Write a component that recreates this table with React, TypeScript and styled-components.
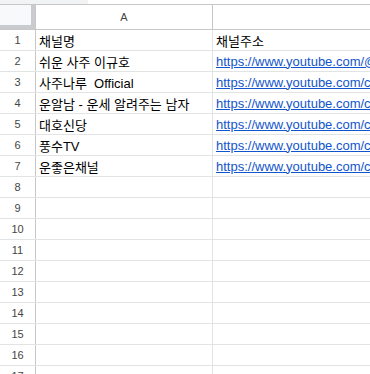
import styled, { createGlobalStyle } from "styled-components";

const GlobalStyle = createGlobalStyle`
  html, body {
    margin: 0;
    padding: 0;
    background: #ffffff;
    overflow: hidden;
  }
  body {
    font-family: "Liberation Sans", "Noto Sans CJK KR", Arial, sans-serif;
  }
`;

const rows: { name: string; url: string }[] = [
  { name: "채널명", url: "" },
  { name: "쉬운 사주 이규호", url: "https://www.youtube.com/@sajulee" },
  { name: "사주나루  Official", url: "https://www.youtube.com/channel/UC" },
  { name: "운알남 - 운세 알려주는 남자", url: "https://www.youtube.com/channel/UC" },
  { name: "대호신당", url: "https://www.youtube.com/channel/UC" },
  { name: "풍수TV", url: "https://www.youtube.com/channel/UC" },
  { name: "운좋은채널", url: "https://www.youtube.com/channel/UC" }
];

const TOTAL_ROWS = 17;

export default function App() {
  return (
    <Sheet>
      <GlobalStyle />
      <TopStrip>
        <NameBoxEdge />
      </TopStrip>
      <HeaderRow>
        <Corner />
        <ColHeader $width={177}>A</ColHeader>
        <ColHeader $width={200} />
      </HeaderRow>
      {Array.from({ length: TOTAL_ROWS }, (_, i) => {
        const row = rows[i];
        return (
          <Row key={i}>
            <RowHeader>{i + 1}</RowHeader>
            <Cell $width={177}>{row?.name}</Cell>
            <Cell $width={200}>
              {i === 0 ? "채널주소" : row ? <Link>{row.url}</Link> : null}
            </Cell>
          </Row>
        );
      })}
    </Sheet>
  );
}

const Sheet = styled.div`
  width: 370px;
  height: 374px;
  overflow: hidden;
  display: flex;
  flex-direction: column;
`;

const TopStrip = styled.div`
  height: 4px;
  flex: none;
  display: flex;
  background: #ffffff;
  border-bottom: 1px solid #c7c7c7;
`;

const NameBoxEdge = styled.div`
  width: 88px;
  background: #f1f3f4;
`;

const HeaderRow = styled.div`
  display: flex;
  height: 25px;
  flex: none;
  border-bottom: 1px solid #c7c7c7;
  box-sizing: border-box;
`;

const Corner = styled.div`
  width: 36px;
  flex: none;
  box-sizing: border-box;
  background: #f8f9fa;
  border-right: 1px solid #c7c7c7;
  box-shadow: inset -4px -4px 0 #c9cbce;
`;

const ColHeader = styled.div<{ $width: number }>`
  width: ${(p) => p.$width}px;
  flex: none;
  box-sizing: border-box;
  border-right: 1px solid #c7c7c7;
  background: #ffffff;
  display: flex;
  align-items: center;
  justify-content: center;
  font-size: 11px;
  color: #444746;
`;

const Row = styled.div`
  display: flex;
  height: 21px;
  flex: none;
  box-sizing: border-box;
  border-bottom: 1px solid #e2e3e3;
`;

const RowHeader = styled.div`
  width: 36px;
  flex: none;
  box-sizing: border-box;
  border-right: 1px solid #c7c7c7;
  display: flex;
  align-items: center;
  justify-content: center;
  font-size: 11px;
  color: #444746;
`;

const Cell = styled.div<{ $width: number }>`
  width: ${(p) => p.$width}px;
  flex: none;
  box-sizing: border-box;
  border-right: 1px solid #e2e3e3;
  padding: 0 3px;
  display: flex;
  align-items: center;
  font-size: 13px;
  color: #000000;
  white-space: pre;
  overflow: hidden;
`;

const Link = styled.span`
  color: #1155cc;
  text-decoration: underline;
`;
